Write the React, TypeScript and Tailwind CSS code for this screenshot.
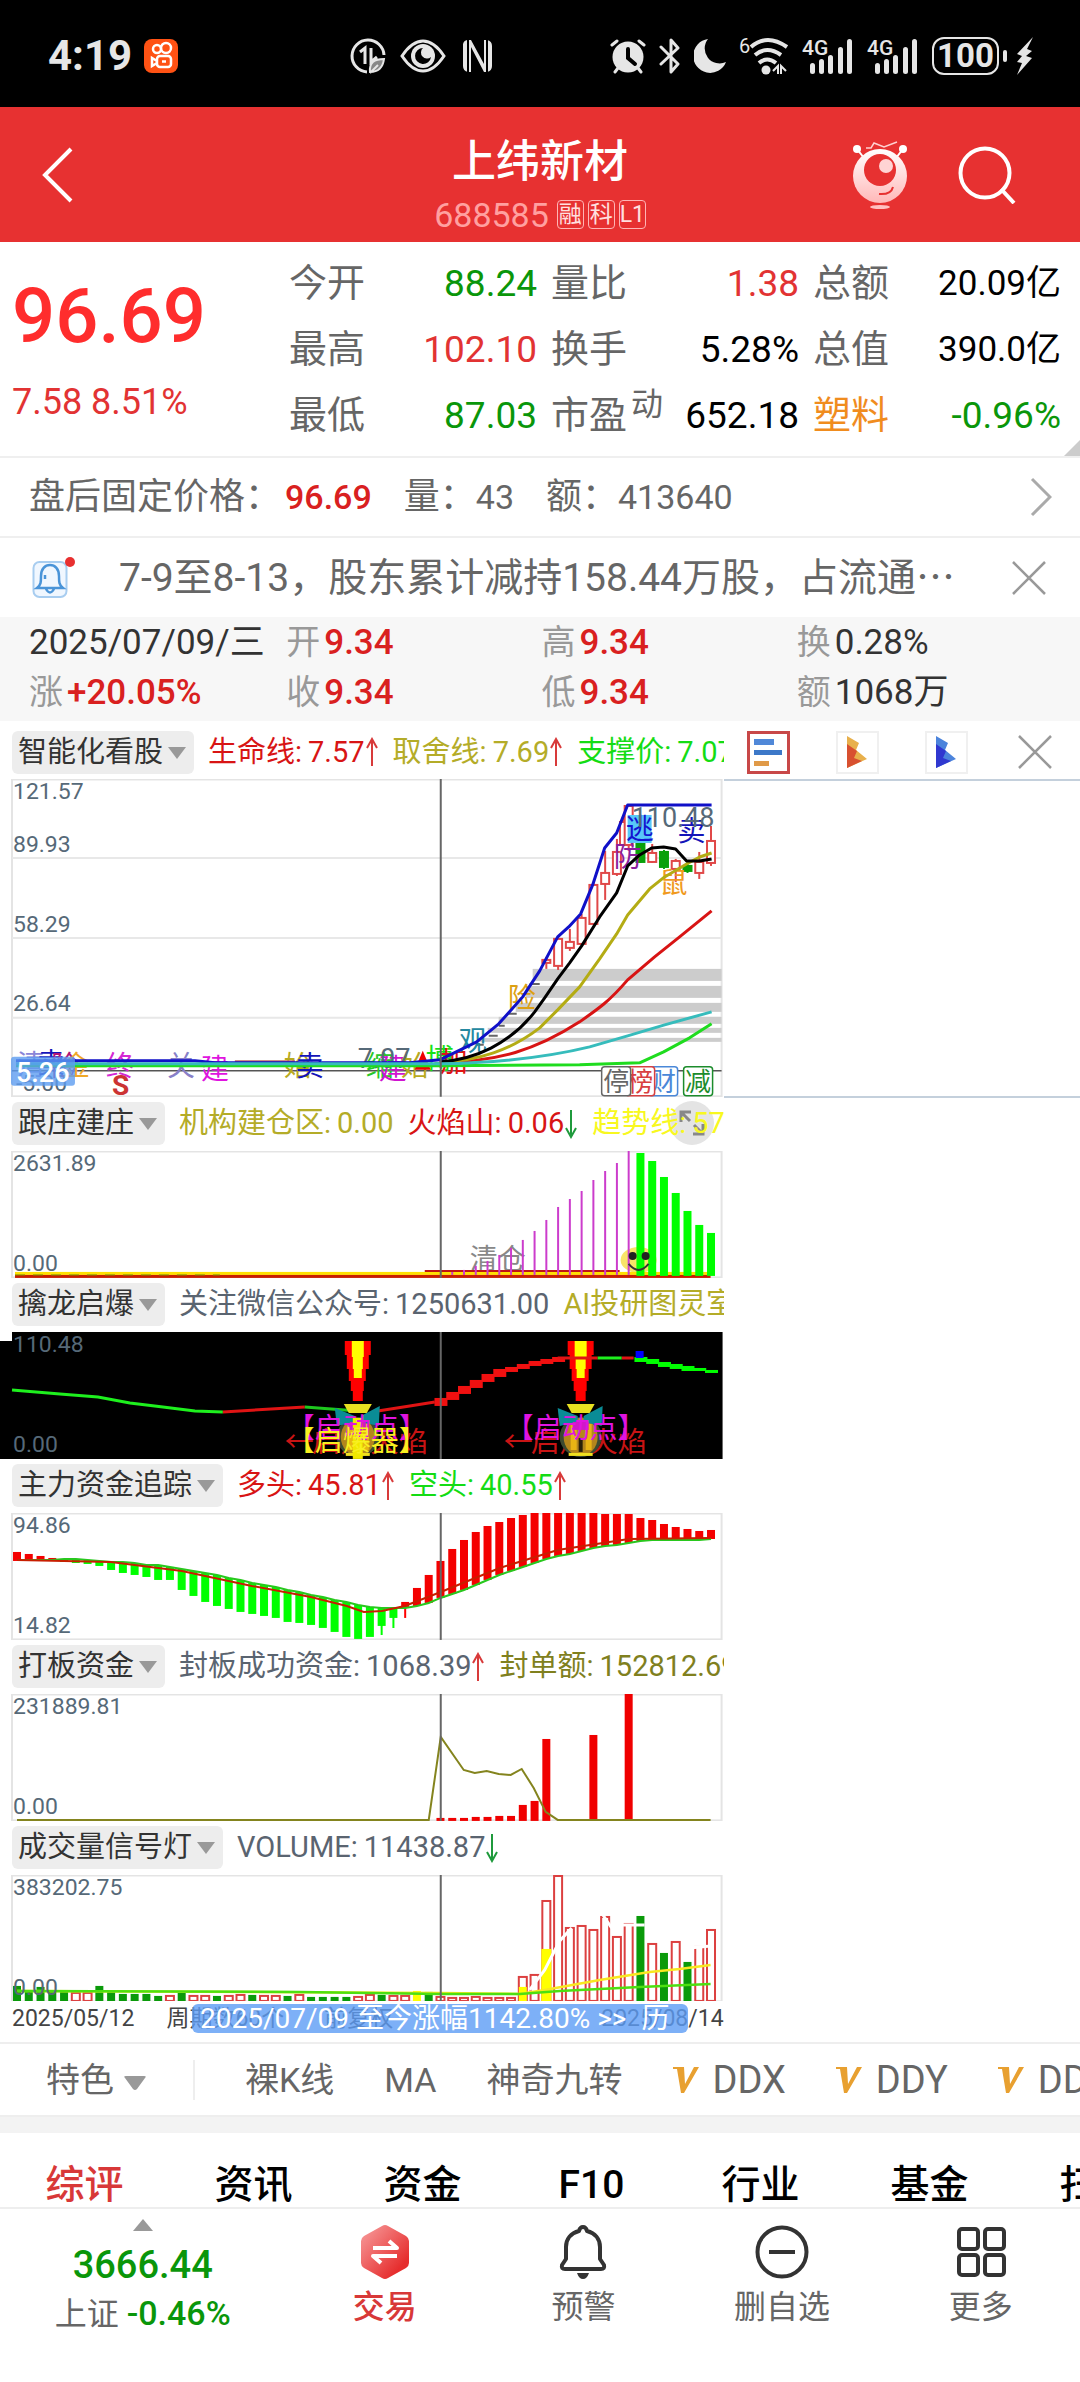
import type { ReactNode } from "react";

const quotes = [
    { label: "今开", value: "88.24", tone: "text-[#0a960a]" },
    { label: "量比", value: "1.38", tone: "text-[#e23333]" },
    { label: "总额", value: "20.09亿", tone: "text-black", small: true },
    { label: "最高", value: "102.10", tone: "text-[#e23333]" },
    { label: "换手", value: "5.28%", tone: "text-black" },
    { label: "总值", value: "390.0亿", tone: "text-black", small: true },
    { label: "最低", value: "87.03", tone: "text-[#0a960a]" },
    { label: "市盈", sup: "动", value: "652.18", tone: "text-black" },
    { label: "塑料", value: "-0.96%", tone: "text-[#0a960a]", labelTone: "text-[#f08c1e]" },
];

const dayStats = [
    { label: "", value: "2025/07/09/三", tone: "text-[#333]" },
    { label: "开", value: "9.34", tone: "text-[#d92020] font-medium" },
    { label: "高", value: "9.34", tone: "text-[#d92020] font-medium" },
    { label: "换", value: "0.28%", tone: "text-[#333]" },
    { label: "涨", value: "+20.05%", tone: "text-[#d92020] font-medium" },
    { label: "收", value: "9.34", tone: "text-[#d92020] font-medium" },
    { label: "低", value: "9.34", tone: "text-[#d92020] font-medium" },
    { label: "额", value: "1068万", tone: "text-[#333]" },
];

const periods = [
    { name: "裸K线" },
    { name: "MA" },
    { name: "神奇九转" },
    { name: "DDX", vip: true },
    { name: "DDY", vip: true },
    { name: "DDZ", vip: true },
];

const tabs = ["综评", "资讯", "资金", "F10", "行业", "基金", "扫雷"];

// centre of the n-th trading day on every chart
const dayX = (n: number) => 17 + n * 11.77;

// [day, body top, body bottom, wick top, wick bottom, rising]
const candles: [number, number, number, number, number, boolean][] = [
    [45, 181, 184, 178, 190, true],
    [46, 160, 187, 158, 191, true],
    [47, 163, 169, 150, 172, true],
    [48, 139, 165, 135, 166, true],
    [49, 106, 145, 104, 146, true],
    [50, 94, 105, 72, 121, true],
    [51, 73, 95, 60, 97, true],
    [51.6, 43, 66, 38, 67, true],
    [52, 27, 66, 27, 72, true],
    [53, 65, 83, 60, 84, false],
    [54, 74, 83, 65, 84, true],
    [55, 73, 88, 71, 90, false],
    [56, 82, 90, 80, 103, true],
    [57, 87, 92, 83, 94, false],
    [58, 83, 94, 73, 100, true],
    [59, 62, 84, 47, 87, true],
];

const mountain = [121, 119, 115, 110, 104, 97, 89, 80, 69, 56, 48, 40, 29, 20, 12, 0];
const retreat = [2, 10, 26, 42, 60, 74, 82];

const flow: [number, number][] = [
    [39, 48], [41, 48], [43, 48], [45, 48], [46, 49], [46, 50], [47, 51], [48, 53], [49, 57], [49, 60],
    [50, 62], [52, 64], [52, 67], [54, 67], [56, 77], [58, 83], [60, 89], [62, 93], [65, 96], [67, 99],
    [70, 101], [72, 103], [74, 105], [77, 109], [79, 110], [82, 112], [84, 115], [87, 119], [89, 124], [92, 126],
    [94, 124], [95, 113], [95, 105], [89, 95], [75, 93], [62, 90], [48, 85], [36, 81], [27, 77], [19, 72],
    [13, 67], [9, 62], [5, 58], [2, 54], [0, 50], [0, 46], [0, 43], [0, 41], [0, 38], [0, 35],
    [1, 33], [1, 32], [1, 30], [5, 28], [7, 27], [11, 27], [14, 27], [16, 27], [18, 27], [17, 26],
];

const sealed: [number, number][] = [
    [36, 124], [37, 124], [38, 124], [39, 123], [40, 123], [41, 122], [42, 122], [43, 111], [44, 107], [45, 45], [49, 41], [52, 0],
];

const volumes: [number, string][] = [
    [111, "g"], [117, "g"], [112, "g"], [117, "g"], [117, "g"], [117, "r"], [117, "r"], [111, "g"], [116, "g"], [119, "g"],
    [119, "g"], [119, "g"], [121, "g"], [120, "r"], [118, "g"], [120, "r"], [120, "r"], [121, "g"], [120, "r"], [119, "r"],
    [120, "g"], [120, "r"], [120, "r"], [121, "g"], [119, "r"], [122, "g"], [122, "g"], [122, "g"], [122, "g"], [121, "r"],
    [119, "r"], [120, "g"], [120, "r"], [120, "r"], [116, "y"], [117, "g"], [121, "r"], [122, "r"], [122, "r"], [121, "r"],
    [122, "r"], [122, "r"], [122, "r"], [101, "r"], [99, "r"], [25, "r"], [0, "r"], [52, "r"], [50, "r"], [54, "r"],
    [41, "r"], [61, "r"], [48, "r"], [41, "g"], [68, "r"], [78, "g"], [66, "r"], [87, "g"], [71, "r"], [54, "r"],
];

const glyphs: [string, number, number, string][] = [
    ["清", 17, 296, "#8a86d8"],
    ["卖", 37, 294, "#1414b8"],
    ["险", 51, 297, "#b01478"],
    ["金", 62, 297, "#f0a828"],
    ["终", 106, 297, "#d428d4"],
    ["关", 167, 297, "#8880c8"],
    ["建", 201, 300, "#e014e0"],
    ["始", 284, 297, "#b8aa1e"],
    ["卖", 296, 297, "#1414b8"],
    ["缩", 366, 297, "#28c828"],
    ["建", 379, 300, "#d014d0"],
    ["始", 401, 297, "#b8aa1e"],
    ["博", 426, 290, "#18e018"],
    ["加", 440, 293, "#e01414"],
    ["观", 459, 272, "#2488a0"],
    ["险", 508, 229, "#dca014"],
    ["防", 614, 88, "#8c1e9c"],
    ["鼠", 660, 114, "#f09a1e"],
    ["卖", 678, 62, "#1414b8"],
];

function Arrow({ up }: { up?: boolean }) {
    return (
        <svg viewBox="0 0 14 30" className="h-[30px] w-3.5 shrink-0" fill="none" stroke={up ? "#d83a3a" : "#1f9a3c"} strokeWidth="2">
            {up ? <path d="M7 29V2M2 11L7 2l5 9" /> : <path d="M7 1v27M2 19l5 9 5-9" />}
        </svg>
    );
}

function Picker({ name, children }: { name: string; children?: ReactNode }) {
    return (
        <div className="relative flex h-[54px] items-center gap-3.5 overflow-hidden whitespace-nowrap pl-3 text-[29px] leading-none">
            <div className="relative shrink-0">
                <select aria-label={name} className="h-[43px] appearance-none rounded-md bg-[#ededed] pl-1.5 pr-[30px] text-[29px] leading-[43px] text-[#333]">
                    <option>{name}</option>
                </select>
                <svg viewBox="0 0 18 12" className="pointer-events-none absolute right-2 top-4 h-3 w-[18px]">
                    <path d="M0 0h18L9 12z" fill="#999" />
                </svg>
            </div>
            {children}
        </div>
    );
}

function Reading({ name, value, tone, trend }: { name: string; value: string; tone: string; trend?: "up" | "down" }) {
    return (
        <span className={`flex shrink-0 items-center ${tone}`}>
            {name}:
            <span className="ml-1.5">{value}</span>
            {trend && <Arrow up={trend === "up"} />}
        </span>
    );
}

function Plot({ height, high, low, dark, children }: { height: number; high?: string; low?: string; dark?: boolean; children: ReactNode }) {
    return (
        <svg viewBox={`0 0 724 ${height}`} className="block h-auto w-full overflow-hidden text-[23px]">
            {dark ? <path d="M12 0h711v127H0V9h12z" fill="#000" /> : <rect x="12" y="0.5" width="710" height={height - 1} fill="#fff" stroke="#e4e4e4" strokeWidth="2" />}
            {children}
            {high && <text x="13" y="20" fill="#566978">{high}</text>}
            {low && <text x="13" y="120" fill="#566978">{low}</text>}
            <path d={`M441 0v${height}`} stroke="#666" strokeWidth="2" />
        </svg>
    );
}

function Badge({ x, text, color }: { x: number; text: string; color: string }) {
    return (
        <g>
            <rect x={x} y="288" width="29" height="29" rx="3" fill="#fff" stroke={color} strokeWidth="1.5" />
            <text x={x + 1.5} y="312" fontSize="26" fill={color}>{text}</text>
        </g>
    );
}

function PricePlot() {
    return (
        <Plot height={318} high="121.57">
            <path d="M12 79h710M12 159h710M12 239h710" stroke="#e8e8e8" strokeWidth="2" />
            <g fill="#ccc">
                <rect x="533" y="190" width="189" height="12" />
                <rect x="526" y="207" width="196" height="12" />
                <rect x="516" y="224" width="206" height="9" />
                <rect x="499" y="238" width="223" height="7" />
                <rect x="488" y="249" width="234" height="5" />
                <rect x="478" y="259" width="244" height="4" />
            </g>
            <path d="M12 292h710" stroke="#555" strokeWidth="1.5" />
            <g fill="#566978">
                <text x="13" y="73">89.93</text>
                <text x="13" y="153">58.29</text>
                <text x="13" y="232">26.64</text>
                <text x="16" y="312">-5.00</text>
            </g>
            {candles.map(([day, top, bottom, high, low, rising]) => (
                <g key={day} stroke={rising ? "#e04848" : "#0aa00a"} strokeWidth="2" fill={rising ? "#fff" : "#0aa00a"}>
                    <path d={`M${dayX(day)} ${high}V${low}`} />
                    <rect x={dayX(day) - 4} y={top} width="8" height={bottom - top} />
                </g>
            ))}
            <path d="M476 266h8M489 257h9M499 247h6M509 235h8M530 205h10" stroke="#666" strokeWidth="2" />
            <rect x="628" y="36" width="24" height="28" fill="#58c8f8" />
            {glyphs.map(([text, x, y, color]) => (
                <text key={x} x={x} y={y} fontSize="28" fill={color}>{text}</text>
            ))}
            <text x="626" y="60" fontSize="28" fill="#1414d0">逃</text>
            <text x="112" y="316" fontSize="28" fontWeight="700" fill="#cc3333">S</text>
            <path d="M423 272l8 19h-16z" fill="#e00" />
            <g fontSize="27" fill="#566978">
                <text x="632" y="48">110.48</text>
                <text x="358" y="289">7.07</text>
            </g>
            <g fill="none" strokeWidth="3" strokeLinejoin="round">
                <path d="M235 283h60" stroke="#c06060" />
                <path d="M16 287H440L580 286 640 284 664 273 690 259 712 245" stroke="#1fdc1f" />
                <path d="M440 284C500 282 535 272 580 243 600 229 610 222 628 201L655 178 680 158 712 132" stroke="#d81414" />
                <path d="M440 284C480 281 510 272 540 249L558 231 580 208 600 180 617 155 628 136 650 110 665 98 687 85 700 78 712 74" stroke="#b4ac14" />
                <path d="M440 283C475 281 510 265 535 233L545 219 558 200 570 184 582 167 600 138 617 114 628 87 640 76 652 69 664 68 676 70 687 82 700 82 712 80" stroke="#000" />
                <path d="M16 282H195L215 284H410L440 281 477 263 499 245 523 218 540 192 558 158 569 148 581 135 593 106 605 69 617 54 628 26H712" stroke="#1010c8" />
                <path d="M16 285H440C500 284 545 279 590 268L628 257 665 246 712 233" stroke="#36bcbc" />
            </g>
            <rect x="11" y="278" width="64" height="29" rx="3" fill="#5c9cf0" fillOpacity="0.8" />
            <text x="16" y="303" fontSize="27" fill="#fff" fontWeight="500">5.26</text>
            <Badge x={649} text="财" color="#4a88d8" />
            <Badge x={626} text="榜" color="#d84040" />
            <Badge x={602} text="停" color="#666" />
            <Badge x={684} text="减" color="#1c8c2c" />
        </Plot>
    );
}

function MountainPlot() {
    return (
        <Plot height={127} high="2631.89" low="0.00">
            <text x="470" y="118" fontSize="28" fill="#888">清仓</text>
            <ellipse cx="639" cy="109" rx="18" ry="13" fill="#f8e468" />
            <rect x="15" y="121" width="696" height="3" fill="#ffe000" />
            <rect x="15" y="124" width="696" height="3" fill="#c81e00" />
            <path d="M15 124h205" stroke="#7a9a00" strokeDasharray="10 8" />
            <path d="M425 120h195" stroke="#c01414" strokeWidth="2" />
            {mountain.map((y, i) => (
                <path key={y} d={`M${dayX(37 + i)} ${y}V124`} stroke="#cc3ccc" strokeWidth="2" />
            ))}
            {retreat.map((y, i) => (
                <rect key={y} x={dayX(53 + i) - 4} y={y} width="8" height={125 - y} fill="#0f0" />
            ))}
            <circle cx="633" cy="105" r="4" fill="#222" />
            <circle cx="646" cy="105" r="4" fill="#222" />
            <path d="M629 113q10 12 20 0" stroke="#333" strokeWidth="2" fill="none" />
        </Plot>
    );
}

function Rocket({ x, drip }: { x: number; drip?: boolean }) {
    return (
        <g transform={`translate(${x} 0)`}>
            <path d="M-13 9h26v14h-2v14h-3v12h-2v10h-1v10H-5V59h-2V49h-2V37h-2V23h-2z" fill="#f00" />
            <path d="M-6 9H6v16H5v12H4v9h-8v-9h-1V25h-1z" fill="#ff0" />
            <ellipse cx="0" cy="105" rx="21" ry="20" fill="#3c4a30" />
            <ellipse cx="0" cy="105" rx="17" ry="19" fill="#b4861c" />
            <path d="M-10 92h6v26h-6zM5 92h6v26H5z" fill="#e8b414" />
            <path d="M-23 76l20 8v6l-18 4zM22 74L3 84v6l18 4z" fill="#0a8c96" />
            <path d="M-14 72h28l-5 9H-9z" fill="#e8e020" />
            <path d="M-8 90h16v8H-8z" fill="#d018c8" />
            <path d="M-2 106h4v14h-4z" fill="#2a2008" />
            <path d="M-12 121h24v3h-24z" fill="#f0e020" />
            {drip && <path d="M-5 86H5v41H-5z" fill="#f0e800" />}
        </g>
    );
}

function IgnitionPlot() {
    const climb = [70, 64, 58, 52, 46, 41, 37, 34, 31, 29, 27];
    const fade = [27, 29, 32, 34, 36, 38, 40];
    return (
        <Plot height={127} high="110.48" low="0.00" dark>
            <g fill="none" strokeWidth="3">
                <path d="M12 58L60 62 98 65 130 71 163 75 195 79 223 80" stroke="#1ef01e" />
                <path d="M223 80L305 75" stroke="#e01414" />
                <path d="M305 75L358 79" stroke="#1ec81e" />
                <path d="M378 79L410 74 435 70" stroke="#e01414" />
            </g>
            {climb.map((y, i) => (
                <rect key={y} x={dayX(36 + i) - 6} y={y - (i < 6 ? 4 : 2)} width="13" height={i < 6 ? 8 : 5} fill="#f01010" />
            ))}
            {fade.map((y, i) => (
                <rect key={y} x={dayX(53 + i) - 6} y={y - 2} width="13" height={i < 5 ? 5 : 3} fill="#0f0" />
            ))}
            <rect x="636" y="19" width="8" height="7" fill="#00f" />
            <g fontSize="29" fill="#c81414">
                <text x="285" y="120">←</text>
                <text x="312" y="120">启爆火焰</text>
                <text x="504" y="120">←</text>
                <text x="531" y="120">启爆火焰</text>
            </g>
            <Rocket x={358} drip />
            <Rocket x={581} />
            <path d="M558 26h40M622 26h12" stroke="#e01414" strokeWidth="3" />
            <path d="M598 26h24" stroke="#1ef01e" strokeWidth="3" />
            <g fontSize="28">
                <text x="287" y="106" fill="#e014e0">【启动点】</text>
                <text x="506" y="106" fill="#e014e0">【启动点】</text>
                <text x="287" y="119" fill="#f8f020">【启爆器】</text>
            </g>
        </Plot>
    );
}

function FlowPlot() {
    const edge = flow.map(([top, bottom], i) => `${dayX(i)},${i > 32 ? bottom : i < 4 ? 47 : top}`).join(" ");
    return (
        <Plot height={127} high="94.86" low="14.82">
            {flow.map(([top, bottom], i) => {
                const red = i < 4 || i > 32;
                return <rect key={i} x={dayX(i) - 4} y={top} width="8" height={bottom - top} fill={red ? "#f40000" : "#0f0"} />;
            })}
            <path d={`M${dayX(31)} 110v12M${dayX(32)} 100v15`} stroke="#0f0" strokeWidth="2" />
            <path d={`M${dayX(33)} 90v15`} stroke="#f00" strokeWidth="2" />
            <polyline points={edge} fill="none" stroke="#28c81e" strokeWidth="2" />
            <polyline
                points="17,47 111,49 182,58 252,73 311,84 347,93 364,99 382,98 405,93 441,79 500,55 558,37 629,26 711,25"
                fill="none"
                stroke="#c81e00"
                strokeWidth="2"
            />
        </Plot>
    );
}

function SealPlot() {
    return (
        <Plot height={127} high="231889.81" low="0.00">
            {sealed.map(([day, y]) => (
                <rect key={day} x={dayX(day) - 4} y={y} width="8" height={127 - y} fill="#f00000" />
            ))}
            <polyline
                points="17,126 429,126 441,43 464,76 475,79 487,77 499,80 511,81 522,75 534,94 546,118 558,126 711,126"
                fill="none"
                stroke="#84841e"
                strokeWidth="2"
            />
        </Plot>
    );
}

function VolumePlot() {
    return (
        <Plot height={127} high="383202.75" low="0.00">
            {volumes.map(([y, kind], i) =>
                kind === "r" ? (
                    <rect key={i} x={dayX(i) - 4} y={y + 1} width="8" height={125 - y} fill="#fff" stroke="#dc4040" strokeWidth="2" />
                ) : (
                    <rect key={i} x={dayX(i) - 4} y={y} width="8" height={127 - y} fill={kind === "g" ? "#0a9a0a" : "#ff0"} />
                ),
            )}
            <rect x={dayX(43) - 4} y="112" width="8" height="15" fill="#ff0" />
            <rect x={dayX(45) - 5} y="74" width="10" height="53" fill="#ff0" />
            <path d="M530 115L545 95 560 66 572 53M602 38L612 53M622 50L645 50M690 73L711 71" fill="none" stroke="#fff" strokeWidth="3" />
            <path d="M17 116L440 118 520 119 545 115 600 105 650 97 680 94 711 90" fill="none" stroke="#f8e820" strokeWidth="2.5" />
            <path d="M17 116L300 117 440 119 520 119 560 116 640 112 711 109" fill="none" stroke="#4ce010" strokeWidth="2.5" />
        </Plot>
    );
}

function Signal() {
    return (
        <svg viewBox="0 0 52 38" className="h-[38px] w-[52px]" fill="#e6e6e6">
            <text x="0" y="18" fontSize="21" fontWeight="500">4G</text>
            <rect x="8" y="26" width="5" height="11" rx="2.5" />
            <rect x="17" y="22" width="5" height="15" rx="2.5" />
            <rect x="26" y="18" width="5" height="19" rx="2.5" />
            <rect x="36" y="10" width="5" height="27" rx="2.5" />
            <rect x="45" y="2" width="5" height="35" rx="2.5" />
        </svg>
    );
}

function StatusBar() {
    return (
        <div className="grid h-[107px] grid-cols-[350fr_260fr_470fr] items-center bg-black pt-1 text-[#e6e6e6]">
            <div className="flex items-center gap-3 pl-12">
                <span className="text-[42px] font-bold leading-none">4:19</span>
                <svg viewBox="0 0 34 34" className="size-[34px]" fill="none" stroke="#fff" strokeWidth="2.5">
                    <rect width="34" height="34" rx="8" fill="#ff5214" stroke="none" />
                    <circle cx="13" cy="10" r="4" />
                    <circle cx="22" cy="9" r="5" />
                    <rect x="13" y="17" width="14" height="11" rx="3" />
                    <path d="M13 22l-5-3v8l5-3" />
                    <path d="M18 22.500h4" />
                </svg>
            </div>
            <div className="flex items-center gap-[14px]">
                <svg viewBox="0 0 36 36" className="size-9" fill="none" stroke="#e6e6e6" strokeWidth="3">
                    <path d="M17 34A16 16 0 1 1 34 17" />
                    <path d="M10 14l5-4v16M21 10v14l6-5" />
                    <path d="M20 34c-1-9 4-13 14-13-1 8-5 13-14 13zM20 35l8-8" strokeWidth="2" fill="#888" />
                </svg>
                <svg viewBox="0 0 46 36" className="h-9 w-[46px]" fill="none" stroke="#e6e6e6" strokeWidth="3">
                    <path d="M2 18Q12 3 23 3t21 15Q34 33 23 33T2 18z" />
                    <circle cx="23" cy="18" r="12" fill="#e6e6e6" stroke="none" />
                    <path d="M23 10a8 8 0 1 0 8 9 6 6 0 0 1-8-9z" fill="#000" stroke="none" />
                </svg>
                <svg viewBox="0 0 34 36" className="h-9 w-[34px]" fill="#e6e6e6">
                    <path d="M3 6q1-4 5-4h3l13 24V2h3q5 1 5 6v20q0 5-5 6h-3L11 9v25H8q-5-1-5-6z" />
                    <path d="M8 2v32M27 2v32" stroke="#000" strokeWidth="2" />
                </svg>
            </div>
            <div className="flex items-center gap-[13px]">
                <svg viewBox="0 0 36 36" className="size-9" fill="none" stroke="#e6e6e6" strokeWidth="4" strokeLinecap="round">
                    <circle cx="18" cy="19" r="15.500" fill="#e6e6e6" stroke="none" />
                    <path d="M2 7l5-4M34 7l-5-4M8 30l-3 4M28 30l3 4" strokeWidth="3" />
                    <path d="M18 11v9l7 6" stroke="#000" />
                </svg>
                <svg viewBox="0 0 22 36" className="h-9 w-[22px]" fill="none" stroke="#e6e6e6" strokeWidth="3" strokeLinejoin="round" strokeLinecap="round">
                    <path d="M2 9l17 17-7 8V2l7 8L2 26" />
                </svg>
                <svg viewBox="0 0 32 36" className="h-9 w-8" fill="#e6e6e6">
                    <path d="M14 1a17 17 0 1 0 18 23A15 15 0 0 1 14 1z" />
                </svg>
                <svg viewBox="0 0 50 38" className="h-[38px] w-[50px]" fill="none" stroke="#e6e6e6" strokeWidth="4">
                    <path d="M12 10q16-14 36 0M16 18q12-10 26 0M20 26q8-7 17 0" />
                    <circle cx="27" cy="33" r="4.500" fill="#e6e6e6" stroke="none" />
                    <path d="M34 34l5-5v8M42 37v-8l5 5" strokeWidth="2" />
                    <text x="0" y="16" fontSize="20" stroke="none" fill="#e6e6e6">6</text>
                </svg>
                <Signal />
                <Signal />
                <div className="flex items-center gap-1">
                    <span className="flex h-[38px] w-[67px] items-center justify-center rounded-xl border-2 border-[#e6e6e6] text-[33px] font-bold leading-none">100</span>
                    <span className="h-3 w-1 rounded-sm bg-[#e6e6e6]" />
                    <svg viewBox="0 0 20 38" className="ml-1 h-[38px] w-5" fill="#e6e6e6">
                        <path d="M18 0L2 17l5 2-5 6 5 1-5 12 15-17-6-2 6-5-5-2z" />
                    </svg>
                </div>
            </div>
        </div>
    );
}

function Header() {
    return (
        <header className="grid h-[135px] grid-cols-[1fr_auto_1fr] items-center bg-[#e73131] text-white">
            <button aria-label="返回" className="ml-[42px] w-8">
                <svg viewBox="0 0 32 56" className="h-14 w-8" fill="none" stroke="#fff" strokeWidth="4">
                    <path d="M29 2L3 28l26 26" />
                </svg>
            </button>
            <div className="flex flex-col items-center gap-3 pt-5">
                <h1 className="text-[44px] font-medium leading-[48px]">上纬新材</h1>
                <div className="flex items-center gap-1 text-[34px] leading-[34px] text-[#ffa0a0]">
                    <span className="mr-1">688585</span>
                    {["融", "科", "L1"].map((tag) => (
                        <span key={tag} className="flex h-[29px] w-[27px] items-center justify-center rounded-sm border border-[#ffb4b4] text-[23px] leading-none text-[#ffe0e0]">
                            {tag}
                        </span>
                    ))}
                </div>
            </div>
            <div className="flex items-center justify-end gap-[50px] pr-[64px]">
                <button aria-label="智能助手">
                    <svg viewBox="0 0 56 68" className="h-[68px] w-14">
                        <defs>
                            <linearGradient id="bot" x1="0" y1="0" x2="0" y2="1">
                                <stop offset="0" stopColor="#fff" />
                                <stop offset="1" stopColor="#ffb8b8" />
                            </linearGradient>
                        </defs>
                        <path d="M5 8l7 9M51 8l-7 9" stroke="#fff" strokeWidth="2" />
                        <circle cx="5" cy="8" r="4" fill="#fff" />
                        <circle cx="51" cy="8" r="4" fill="#fff" />
                        <path d="M14 7h5l3-5 10 4 13-5" fill="none" stroke="#ffd0d0" strokeWidth="1.5" />
                        <circle cx="28" cy="35" r="27" fill="url(#bot)" />
                        <circle cx="28" cy="29" r="16" fill="#e73131" />
                        <circle cx="34" cy="25" r="7" fill="#ffd4d4" />
                        <path d="M27 53q12 1 14-7" fill="none" stroke="#e73131" strokeWidth="2" />
                        <ellipse cx="28" cy="66" rx="10" ry="2" fill="#ffc0c0" />
                    </svg>
                </button>
                <button aria-label="搜索">
                    <svg viewBox="0 0 58 58" className="size-[58px]" fill="none" stroke="#fff" strokeWidth="4">
                        <circle cx="27" cy="27" r="24.500" />
                        <path d="M43 43l13 14" />
                    </svg>
                </button>
            </div>
        </header>
    );
}

function Close() {
    return (
        <svg viewBox="0 0 34 34" className="size-[34px]" stroke="#999" strokeWidth="2.5">
            <path d="M1 1l32 32M33 1L1 33" />
        </svg>
    );
}

function QuotePanel() {
    return (
        <section className="relative flex border-b-2 border-[#efefef] py-2">
            <div className="flex w-[289px] shrink-0 flex-col gap-6 pl-3 pt-6 text-[#e23333]">
                <span className="text-[76px] font-medium leading-[84px] text-[#ff2d2d]">96.69</span>
                <span className="text-[36px] leading-10">7.58 8.51%</span>
            </div>
            <dl className="grid grow grid-cols-3 gap-x-[14px] pr-[19px]">
                {quotes.map((q) => (
                    <div key={q.label} className="flex h-[66px] items-center justify-between">
                        <dt className={`flex text-[38px] leading-none ${q.labelTone ?? "text-[#666]"}`}>
                            {q.label}
                            {q.sup && <sup className="top-0 ml-1 mt-[-8px] text-[32px] leading-none">{q.sup}</sup>}
                        </dt>
                        <dd className={`${q.small ? "text-[35px]" : "text-[37px]"} leading-none ${q.tone}`}>{q.value}</dd>
                    </div>
                ))}
            </dl>
            <svg viewBox="0 0 16 16" className="absolute bottom-0 right-0 size-4" fill="#ccc">
                <path d="M16 0v16H0z" />
            </svg>
        </section>
    );
}

export default function App() {
    return (
        <main className="w-full overflow-hidden bg-white font-[Roboto,'Noto_Sans_CJK_SC',sans-serif]">
            <StatusBar />
            <Header />
            <QuotePanel />

            <a href="#after-hours" className="flex h-[80px] items-center border-b-2 border-[#efefef] pl-[29px] pr-7 text-[34px] leading-none text-[#666]">
                <span className="text-[36px]">盘后固定价格：</span>
                <span className="ml-1 font-medium text-[#d92020]">96.69</span>
                <span className="ml-8 text-[36px]">量：</span>
                <span>43</span>
                <span className="ml-8 text-[36px]">额：</span>
                <span>413640</span>
                <svg viewBox="0 0 22 40" className="ml-auto h-10 w-[22px]" fill="none" stroke="#aaa" strokeWidth="3">
                    <path d="M2 2l18 18L2 38" />
                </svg>
            </a>

            <div className="flex h-[79px] items-center pl-8 pr-[34px] text-[#666]">
                <svg viewBox="0 0 44 44" className="size-11 shrink-0" fill="none" stroke="#4a94d8" strokeWidth="2.5">
                    <rect x="1.500" y="6" width="33" height="35" rx="6" fill="#f0f7ff" stroke="#a8cdf0" strokeWidth="2" />
                    <path d="M5 32c4-3 4-6 4-12 0-7 4-11 9-11s9 4 9 11c0 6 0 9 4 12zM14 33q4 7 8 0M13 23v-4" />
                    <circle cx="38" cy="6" r="5" fill="#e83030" stroke="none" />
                </svg>
                <a href="#news" className="ml-[43px] grow truncate text-[39px] leading-[54px]">
                    7-9至8-13，股东累计减持158.44万股，占流通⋯
                </a>
                <button aria-label="关闭公告"><Close /></button>
            </div>

            <dl className="grid grid-cols-[257fr_255fr_255fr_283fr] bg-[#f7f7f7] pb-1 pl-[29px]">
                {dayStats.map((s, i) => (
                    <div key={i} className="flex h-[50px] items-center gap-1 text-[34px] leading-none">
                        {s.label && <dt className="text-[#999]">{s.label}</dt>}
                        <dd className={`text-[35px] ${s.tone}`}>{s.value}</dd>
                    </div>
                ))}
            </dl>

            <div className="grid grid-cols-[67%_1fr] pt-1">
                <section className="min-w-0">
                    <Picker name="智能化看股">
                        <Reading name="生命线" value="7.57" tone="text-[#d81414]" trend="up" />
                        <Reading name="取舍线" value="7.69" tone="text-[#b4ac28]" trend="up" />
                        <Reading name="支撑价" value="7.07" tone="text-[#14dc14]" />
                    </Picker>
                    <PricePlot />
                    <Picker name="跟庄建庄">
                        <Reading name="机构建仓区" value="0.00" tone="text-[#b4ac28]" />
                        <Reading name="火焰山" value="0.06" tone="text-[#d81414]" trend="down" />
                        <button aria-label="全屏" className="absolute right-2.5 top-1 flex size-[44px] items-center justify-center rounded-full bg-[#e4e4e4]">
                            <svg viewBox="0 0 26 26" className="size-[26px]" fill="none" stroke="#888" strokeWidth="3">
                                <path d="M2 12V2h10M2 2l9 9M24 14v10H14M24 24l-9-9" />
                            </svg>
                        </button>
                        <div className="relative">
                            <Reading name="趋势线" value="57.31" tone="text-[#f8f820]" />
                        </div>
                    </Picker>
                    <MountainPlot />
                    <Picker name="擒龙启爆">
                        <Reading name="关注微信公众号" value="1250631.00" tone="text-[#5a6470]" />
                        <Reading name="AI投研图灵室" value="1.00" tone="text-[#b4ac28]" />
                    </Picker>
                    <IgnitionPlot />
                    <Picker name="主力资金追踪">
                        <Reading name="多头" value="45.81" tone="text-[#d81414]" trend="up" />
                        <Reading name="空头" value="40.55" tone="text-[#14dc14]" trend="up" />
                    </Picker>
                    <FlowPlot />
                    <Picker name="打板资金">
                        <Reading name="封板成功资金" value="1068.39" tone="text-[#5a6470]" trend="up" />
                        <Reading name="封单额" value="152812.69" tone="text-[#80801e]" />
                    </Picker>
                    <SealPlot />
                    <Picker name="成交量信号灯">
                        <Reading name="VOLUME" value="11438.87" tone="text-[#5a6470]" trend="down" />
                    </Picker>
                    <VolumePlot />
                    <div className="relative flex h-[41px] items-start whitespace-nowrap pl-3 pt-1 text-[23px] leading-7 text-[#444]">
                        <span>2025/05/12</span>
                        <span className="ml-8">周期数60个</span>
                        <span className="ml-10">前复权</span>
                        <span className="ml-auto">2025/08/14</span>
                        <button className="absolute left-48 top-[3px] h-[29px] w-[496px] rounded-md bg-[#5c9cf5]/80 pl-2 text-left text-[28px] leading-[29px] text-white">
                            2025/07/09 至今涨幅1142.80% &gt;&gt; <span className="ml-2">历</span>
                        </button>
                    </div>
                </section>
                <aside>
                    <div className="grid h-[54px] grid-cols-4 place-items-center">
                        <button aria-label="筹码分布" className="flex size-[43px] items-center justify-center border-3 border-[#c84848]">
                            <svg viewBox="0 0 32 32" className="size-8">
                                <path d="M2 3h20v6H2z" fill="#5088d8" />
                                <path d="M2 14h28v5H2z" fill="#3c78c8" />
                                <path d="M2 25h15v5H2z" fill="#e09a48" />
                            </svg>
                        </button>
                        <button aria-label="主力筹码" className="flex size-[43px] items-center justify-center border-2 border-[#f0f0f0]">
                            <svg viewBox="0 0 32 32" className="size-8">
                                <path d="M6 0l12 7-3 7 11 9-20 9z" fill="#e8b04c" />
                                <path d="M6 8l10 7-3 7 8 3-15 7z" fill="#d85030" />
                            </svg>
                        </button>
                        <button aria-label="散户筹码" className="flex size-[43px] items-center justify-center border-2 border-[#f0f0f0]">
                            <svg viewBox="0 0 32 32" className="size-8">
                                <path d="M6 0l12 7-3 7 11 9-20 9z" fill="#4c84dc" />
                                <path d="M6 8l10 7-3 7 8 3-15 7z" fill="#3038d0" />
                            </svg>
                        </button>
                        <button aria-label="关闭筹码"><Close /></button>
                    </div>
                    <div className="h-[319px] border-y-2 border-[#c4d0dc]" />
                </aside>
            </div>

            <nav className="flex h-[75px] items-center gap-[50px] overflow-hidden whitespace-nowrap border-y-2 border-[#eee] pl-[46px] text-[34px] leading-none text-[#666]">
                <div className="relative flex h-10 w-[149px] shrink-0 items-center border-r-2 border-[#eee]">
                    <select aria-label="特色" className="appearance-none pr-8 text-[34px] leading-10">
                        <option>特色</option>
                    </select>
                    <svg viewBox="0 0 22 14" className="pointer-events-none absolute left-[78px] top-4 h-3.5 w-[22px]">
                        <path d="M2 0h18q3 0 1 2l-8 11q-2 2-4 0L1 2q-2-2 1-2z" fill="#999" />
                    </svg>
                </div>
                {periods.map((p) => (
                    <button key={p.name} className={`flex shrink-0 items-center gap-3.5 ${p.vip ? "text-[38px]" : ""}`}>
                        {p.vip && (
                            <svg viewBox="0 0 26 26" className="size-[26px]">
                                <path d="M0 0h11l1 17L21 0h5L11 26H8L4 2H0z" fill="#e8a030" />
                            </svg>
                        )}
                        {p.name}
                    </button>
                ))}
            </nav>

            <nav className="flex overflow-hidden border-b-2 border-t-[16px] border-b-[#eee] border-t-[#f3f3f3] pt-[30px] text-[39px] font-medium leading-[44px]">
                {tabs.map((tab, i) => (
                    <button key={tab} className={`w-[169px] shrink-0 ${i === 0 ? "text-[#d83838]" : "text-black"}`}>
                        {tab}
                    </button>
                ))}
            </nav>

            <footer className="grid h-[172px] grid-cols-[286fr_199fr_199fr_199fr_199fr] text-center text-[32px] leading-9 text-[#666]">
                <a href="#index" className="flex flex-col items-center pt-2.5">
                    <svg viewBox="0 0 20 12" className="h-3 w-5">
                        <path d="M10 0l10 12H0z" fill="#999" />
                    </svg>
                    <span className="mt-3 text-[38px] font-medium leading-[44px] text-[#0a960a]">3666.44</span>
                    <span className="mt-2">
                        上证 <span className="text-[34px] font-medium text-[#0a960a]">-0.46%</span>
                    </span>
                </a>
                <button className="flex flex-col items-center gap-2.5 pt-4 text-[#d83838]">
                    <svg viewBox="0 0 48 54" className="h-[54px] w-12">
                        <defs>
                            <linearGradient id="trade" x1="0" y1="0" x2="1" y2="1">
                                <stop offset="0" stopColor="#f8a0a0" />
                                <stop offset="0.8" stopColor="#e62e2e" />
                            </linearGradient>
                        </defs>
                        <path d="M21 1q3-2 6 0l18 10q3 2 3 5v22q0 3-3 5L27 53q-3 2-6 0L3 43q-3-2-3-5V16q0-3 3-5z" fill="url(#trade)" />
                        <path d="M12 23h24l-8-7M36 31H12l8 7" fill="none" stroke="#fff" strokeWidth="4" strokeLinejoin="round" />
                    </svg>
                    <span className="font-medium">交易</span>
                </button>
                <button className="flex flex-col items-center gap-2.5 pt-4">
                    <svg viewBox="0 0 48 54" className="h-[54px] w-12" fill="none" stroke="#333" strokeWidth="4" strokeLinejoin="round">
                        <path d="M24 2q3 0 4 4c8 2 13 8 13 16v12l4 6q1 4-3 4H6q-4 0-3-4l4-6V22C7 14 12 8 20 6q1-4 4-4z" />
                        <path d="M18 48h12q-2 6-6 6t-6-6z" fill="#333" stroke="none" />
                    </svg>
                    预警
                </button>
                <button className="flex flex-col items-center gap-2.5 pt-4">
                    <svg viewBox="0 0 54 54" className="size-[54px]" fill="none" stroke="#333" strokeWidth="4">
                        <circle cx="27" cy="27" r="24.500" />
                        <path d="M14 27h26" />
                    </svg>
                    删自选
                </button>
                <button className="flex flex-col items-center gap-2.5 pt-4">
                    <svg viewBox="0 0 50 54" className="h-[54px] w-[50px]" fill="none" stroke="#333" strokeWidth="4">
                        <rect x="3" y="4" width="19" height="20" rx="3" />
                        <rect x="29" y="4" width="19" height="20" rx="3" />
                        <rect x="3" y="30" width="19" height="20" rx="3" />
                        <rect x="29" y="30" width="19" height="20" rx="3" />
                    </svg>
                    更多
                </button>
            </footer>
        </main>
    );
}
